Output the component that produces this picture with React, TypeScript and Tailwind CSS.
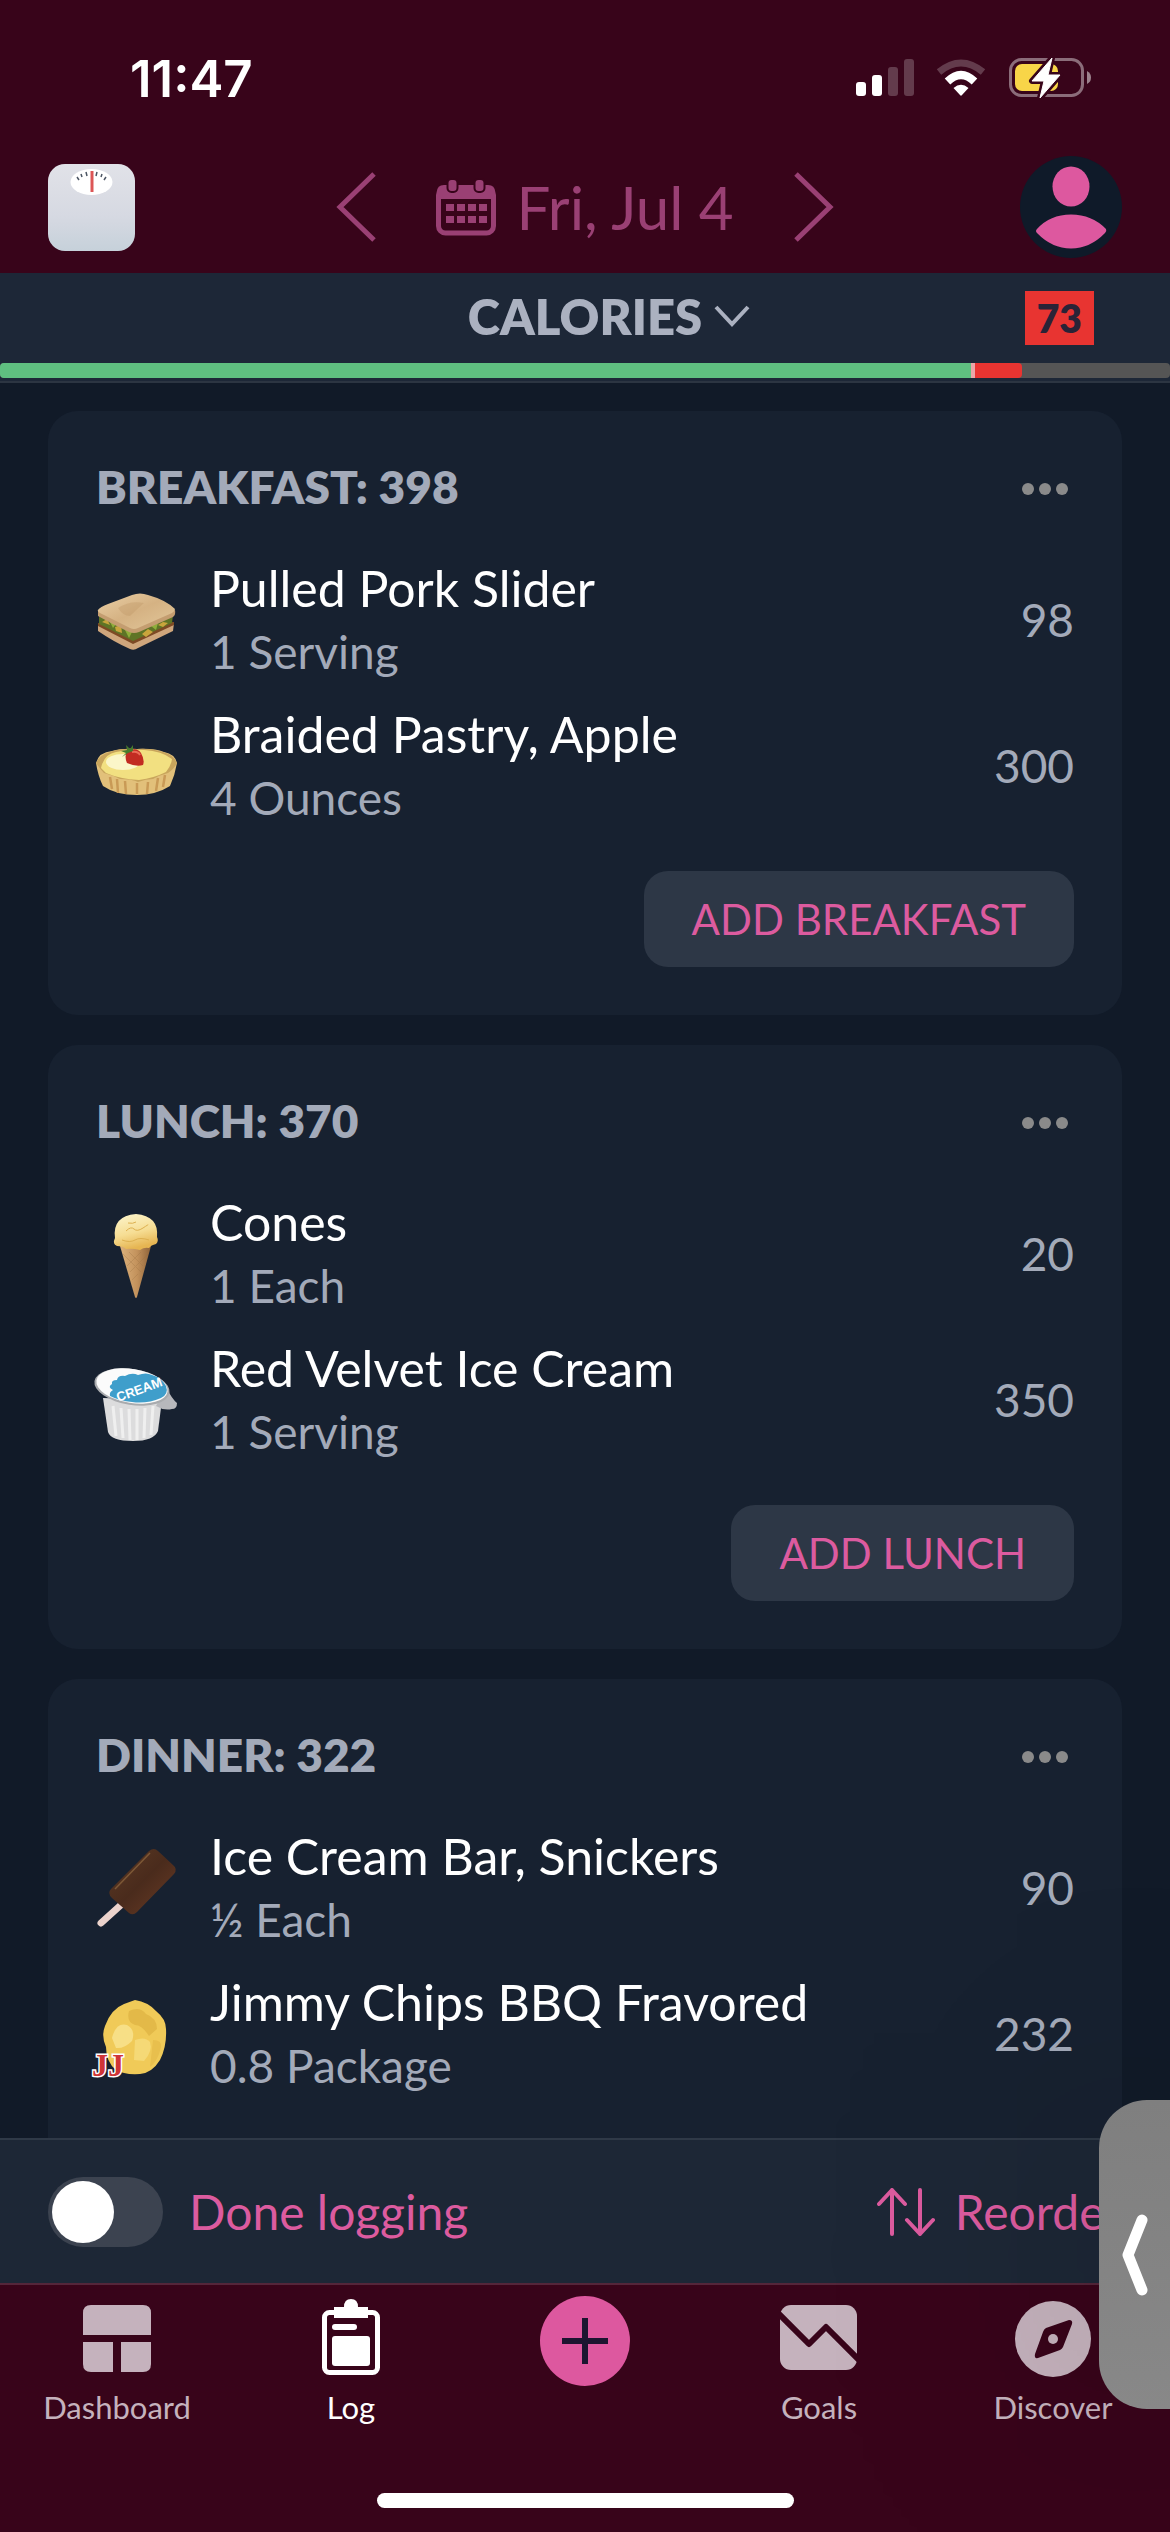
import { useState } from 'react';
import type { ReactNode } from 'react';

interface FoodItem {
  name: string;
  amount: string;
  calories: number;
  icon: ReactNode;
}

interface Meal {
  title: string;
  items: FoodItem[];
  addLabel?: string;
}

function SandwichIcon() {
  return (
    <svg viewBox="0 0 80 80" className="size-20 shrink-0 overflow-visible" aria-hidden="true">
      <defs>
        <linearGradient id="bread" x1="0" y1="0" x2="1" y2="1">
          <stop offset="0" stopColor="#e9cfa6" />
          <stop offset="0.5" stopColor="#d5b283" />
          <stop offset="1" stopColor="#e2c79a" />
        </linearGradient>
      </defs>
      <path d="M2 43 L2 51 Q18 62 34 69 Q38 71 42 68 L77 51 L78 43 L38 60Z" fill="#cfa67c" />
      <path d="M2 43 L2 46 L37 64 L78 45 L78 42Z" fill="#7d4a24" />
      <path d="M3 35 L3 44 L37 61 L76 43 L77 35 L38 51Z" fill="#5f7426" />
      <path d="M6 42l5-3 3 6zM19 47l6-2 1 8-6-2zM46 54l6-5 5 3-7 5zM62 45l5-3 5 1-5 4z" fill="#c9a53c" />
      <path d="M13 40l7 4-3 4zM28 48l8 4-3 6zM55 46l7-3-2 7z" fill="#8fae3a" />
      <path d="M2 30 L2 36 Q16 44 33 52 Q38 54 43 52 L77 37 Q80 35 79 30 L40 46Z" fill="#c49d70" />
      <path d="M2 30 Q4 27 12 24 L36 15 Q44 12 52 15 Q70 20 79 29 Q79 31 76 33 L42 48 Q38 50 34 48 L4 33 Q1 31 2 30Z" fill="url(#bread)" />
      <path d="M22 28 Q34 20 48 23 Q40 30 34 36 Q27 36 22 28Z" fill="#bd9665" opacity="0.35" />
    </svg>
  );
}

function TartIcon() {
  return (
    <svg viewBox="0 0 80 80" className="size-20 shrink-0 overflow-visible" aria-hidden="true">
      <path d="M0 37 Q3 26 16 25 Q26 22 41 23 Q58 22 68 26 Q79 28 81 37 Q79 49 74 60 Q60 69 41 69 Q20 69 7 60 Q2 50 0 37Z" fill="#e2c07a" />
      <path d="M14 51l2 12M21 53l1 14M29 55l1 13M41 57v11M52 56l-1 12M62 52l-2 13M69 49l-2 12" stroke="#c99a56" strokeWidth="2.500" />
      <path d="M0 37 Q4 43 8 47 Q16 49 24 53 Q36 53 42 56 Q50 53 57 53 Q64 49 72 47 Q78 43 81 37 Q78 29 67 26 Q54 22 41 23 Q25 22 14 26 Q3 29 0 37Z" fill="#c8a55c" />
      <path d="M5 42 Q8 28 20 26 Q34 23 48 24 Q66 25 76 33 Q75 40 70 46 Q58 52 43 54 Q24 53 10 47Z" fill="#f2e081" />
      <ellipse cx="27" cy="36" rx="17" ry="8" fill="#fbf6c9" />
      <path d="M31 26 Q40 20 45 27 Q49 34 47 39 Q40 41 31 37 Q28 30 31 26Z" fill="#c22b22" />
      <path d="M36 26 Q42 25 44 29" stroke="#ea6a56" strokeWidth="2" fill="none" />
      <path d="M26 31l4-4-5-2 6-1-1-5 4 4 3-4v6l-5 2z" fill="#477a2c" />
    </svg>
  );
}

function ConeIcon() {
  return (
    <svg viewBox="0 0 80 80" className="size-20 shrink-0 overflow-visible" aria-hidden="true">
      <defs>
        <linearGradient id="wafer">
          <stop offset="0" stopColor="#dcb27c" />
          <stop offset="0.55" stopColor="#c3925c" />
          <stop offset="1" stopColor="#8d6239" />
        </linearGradient>
        <linearGradient id="vanilla" x1="0" y1="0" x2="0.3" y2="1">
          <stop offset="0" stopColor="#fdf6cf" />
          <stop offset="0.6" stopColor="#f6dd93" />
          <stop offset="1" stopColor="#e6b552" />
        </linearGradient>
      </defs>
      <path d="M24 32 L55 32 L41 83 Q40 85 39 83Z" fill="url(#wafer)" />
      <path d="M27 40l18 18M33 38l14 14M52 40l-18 18M45 38L31 52M42 60l-6 6" stroke="#9c7142" strokeWidth="1" opacity="0.3" />
      <path d="M19 24 Q16 2 40 0 Q63 2 61 23 Q63 27 60 30 Q55 31 53 34 Q48 33 44 36 Q36 34 30 35 Q27 32 21 32 Q16 30 19 24Z" fill="url(#vanilla)" />
      <path d="M30 17q5-5 8-2t9-1 5-3M32 9q5 1 8-1M26 26q8 3 13 0t14 0" stroke="#ddb050" strokeWidth="1" fill="none" />
    </svg>
  );
}

function CreamerIcon() {
  return (
    <svg viewBox="0 0 80 80" className="size-20 shrink-0 overflow-visible" aria-hidden="true">
      <path d="M7 38 L12 72 Q15 81 37 81 Q58 81 62 71 L66 40Z" fill="#dcdcdd" />
      <path d="M17 46l3 30M25 48l2 30M33 49l1 31M41 49v31M49 48l-1 30M57 46l-2 29" stroke="#efefef" strokeWidth="3" />
      <path d="M70 27 Q76 39 81 43 Q81 49 76 49 Q68 51 60 46Z" fill="#b7b8bc" />
      <ellipse cx="36" cy="27" rx="38" ry="18" transform="rotate(9 36 27)" fill="#a9abae" />
      <ellipse cx="36" cy="26" rx="36" ry="17" transform="rotate(9 36 26)" fill="#fbfbfb" />
      <path d="M17 30 Q11 27 16 24 Q15 20 21 20 Q22 15 29 16 Q36 12 42 15 Q50 12 56 15 Q66 18 70 26 Q73 34 65 38 Q51 44 36 42 Q24 41 14 36 Q13 32 17 30Z" fill="#3f9ecb" />
      <text x="43" y="34" textAnchor="middle" transform="rotate(-20 43 29)" fill="#ffffff" className="font-['Liberation_Sans_Narrow','Liberation_Sans',sans-serif] text-[13px] font-bold">
        CREAM
      </text>
    </svg>
  );
}

function IceCreamBarIcon() {
  return (
    <svg viewBox="0 0 80 80" className="size-20 shrink-0 overflow-visible" aria-hidden="true">
      <defs>
        <linearGradient id="chocolate" x1="0" y1="0" x2="1" y2="1">
          <stop offset="0" stopColor="#5b3a25" />
          <stop offset="0.5" stopColor="#4a2b1c" />
          <stop offset="1" stopColor="#6a3c26" />
        </linearGradient>
      </defs>
      <path d="M26 56 L5 75" stroke="#ecd3cc" strokeWidth="7" strokeLinecap="round" />
      <path d="M53 3 Q58 -1 62 3 L77 17 Q82 21 78 26 L41 64 Q37 68 33 65 L16 50 Q11 45 15 41Z" fill="url(#chocolate)" />
      <path d="M19 41 L54 5" stroke="#7d5836" strokeWidth="1.500" />
    </svg>
  );
}

function ChipIcon() {
  return (
    <svg viewBox="0 0 80 80" className="size-20 shrink-0 overflow-visible" aria-hidden="true">
      <path d="M39 6 Q52 8 60 17 Q70 25 70 35 Q71 52 64 66 Q56 79 44 80 Q28 81 20 76 Q10 68 10 53 Q5 42 9 32 Q15 15 28 10Z" fill="#f0ca58" />
      <path d="M33 17 Q44 12 50 20 Q61 24 61 35 L53 42 Q46 31 39 31 Q30 28 33 17Z" fill="#e3b948" />
      <path d="M16 44 Q20 28 31 31 Q40 36 36 47 Q28 55 20 54Z" fill="#f7df86" />
      <path d="M39 46 Q49 42 54 48 Q57 57 48 67 L38 66Z" fill="#f5d976" />
      <path d="M57 46 Q66 46 65 53 Q62 67 54 73Z" fill="#e8bf4d" />
      <text x="-4" y="82" fill="#cf3536" stroke="#ffffff" strokeWidth="3" paintOrder="stroke" className="font-['Liberation_Serif',serif] text-[32px] font-bold">
        JJ
      </text>
    </svg>
  );
}

const meals: Meal[] = [
  {
    title: 'BREAKFAST',
    addLabel: 'ADD BREAKFAST',
    items: [
      { name: 'Pulled Pork Slider', amount: '1 Serving', calories: 98, icon: <SandwichIcon /> },
      { name: 'Braided Pastry, Apple', amount: '4 Ounces', calories: 300, icon: <TartIcon /> },
    ],
  },
  {
    title: 'LUNCH',
    addLabel: 'ADD LUNCH',
    items: [
      { name: 'Cones', amount: '1 Each', calories: 20, icon: <ConeIcon /> },
      { name: 'Red Velvet Ice Cream', amount: '1 Serving', calories: 350, icon: <CreamerIcon /> },
    ],
  },
  {
    title: 'DINNER',
    items: [
      { name: 'Ice Cream Bar, Snickers', amount: '½ Each', calories: 90, icon: <IceCreamBarIcon /> },
      { name: 'Jimmy Chips BBQ Fravored', amount: '0.8 Package', calories: 232, icon: <ChipIcon /> },
    ],
  },
];

function StatusBar() {
  return (
    <div className="flex h-[156px] items-center justify-between pr-[78px] pl-[130px]">
      <span className="font-['Inter',sans-serif] text-[51px] leading-none font-semibold text-white">11:47</span>
      <div className="flex items-center gap-[22px]">
        <svg viewBox="0 0 58 38" className="h-[38px] w-[58px]" fill="#ffffff" aria-hidden="true">
          <rect x="0" y="23" width="10" height="14" rx="3" />
          <rect x="16" y="16" width="10" height="21" rx="3" />
          <rect x="32" y="8" width="10" height="29" rx="3" opacity="0.22" />
          <rect x="48" y="0" width="10" height="37" rx="3" opacity="0.22" />
        </svg>
        <svg viewBox="0 0 50 38" className="h-[38px] w-[50px]" aria-hidden="true">
          <path d="M3 13 Q25 -5 47 13" fill="none" stroke="#ffffff" strokeWidth="7" opacity="0.22" />
          <path d="M11.500 22.500 Q25 9.500 38.500 22.500" fill="none" stroke="#ffffff" strokeWidth="8" />
          <path d="M17.500 29 Q25 22.500 32.500 29 L26 36 Q25 37.500 24 36Z" fill="#ffffff" />
        </svg>
        <svg viewBox="0 0 84 42" className="h-[42px] w-[84px]" aria-hidden="true">
          <rect x="2.500" y="2.500" width="72" height="36" rx="11" fill="none" stroke="#ffffff" strokeWidth="3" opacity="0.42" />
          <path d="M79 14 Q83 16 83 20.500 Q83 25 79 27Z" fill="#ffffff" opacity="0.5" />
          <rect x="7" y="7" width="43" height="27" rx="7" fill="#f8d548" />
          <path d="M44 1 L24 24 L36 24 L32 41 L52 18 L40 18Z" fill="#ffffff" stroke="#38041a" strokeWidth="6" strokeLinejoin="round" />
          <path d="M44 1 L24 24 L36 24 L32 41 L52 18 L40 18Z" fill="#ffffff" stroke="#ffffff" strokeWidth="1" strokeLinejoin="round" />
        </svg>
      </div>
    </div>
  );
}

function DateHeader() {
  return (
    <div className="grid grid-cols-[1fr_auto_1fr] items-center px-12 pb-[15px]">
      <button type="button" aria-label="Weigh in" className="justify-self-start">
        <svg viewBox="0 0 87 87" className="size-[87px]" aria-hidden="true">
          <defs>
            <linearGradient id="scale" x1="0" y1="0" x2="0" y2="1">
              <stop offset="0" stopColor="#e1e2e8" />
              <stop offset="0.6" stopColor="#d6d9e2" />
              <stop offset="1" stopColor="#c6d1da" />
            </linearGradient>
          </defs>
          <rect width="87" height="87" rx="17" fill="url(#scale)" />
          <ellipse cx="43.500" cy="18" rx="21" ry="13" fill="#ffffff" />
          <path d="M29 13l2 3M33 10l1 3M38 8l1 4M49 8l-1 4M54 10l-1 3M58 13l-2 3" stroke="#4b5563" strokeWidth="1.500" />
          <path d="M44 7v21" stroke="#dc5656" strokeWidth="3" />
        </svg>
      </button>
      <div className="flex items-center gap-15 text-[#9a4074]">
        <button type="button" aria-label="Previous day">
          <svg viewBox="0 0 40 70" className="h-[70px] w-10" fill="none" stroke="currentColor" strokeWidth="5" aria-hidden="true">
            <path d="M38 2 L4 35 L38 68" />
          </svg>
        </button>
        <button type="button" className="flex items-center gap-5">
          <svg viewBox="0 0 60 58" className="h-[58px] w-[60px]" aria-hidden="true">
            <rect x="2.500" y="10" width="55" height="45" rx="7" fill="none" stroke="currentColor" strokeWidth="5" />
            <path d="M1 21 V14 Q1 7 8 7 H52 Q59 7 59 14 V21Z" fill="currentColor" />
            <rect x="11.500" y="1" width="10" height="13" rx="4" fill="currentColor" stroke="#38041a" strokeWidth="2" />
            <rect x="38.500" y="1" width="10" height="13" rx="4" fill="currentColor" stroke="#38041a" strokeWidth="2" />
            <path d="M10 26h8v7h-8zM21 26h8v7h-8zM32 26h8v7h-8zM43 26h8v7h-8zM10 38h8v7h-8zM21 38h8v7h-8zM32 38h8v7h-8zM43 38h8v7h-8z" fill="currentColor" />
          </svg>
          <span className="text-[60px] leading-16">Fri, Jul 4</span>
        </button>
        <button type="button" aria-label="Next day">
          <svg viewBox="0 0 40 70" className="h-[70px] w-10" fill="none" stroke="currentColor" strokeWidth="5" aria-hidden="true">
            <path d="M2 2 L36 35 L2 68" />
          </svg>
        </button>
      </div>
      <button type="button" aria-label="Profile" className="justify-self-end">
        <svg viewBox="0 0 102 102" className="size-[102px]" aria-hidden="true">
          <circle cx="51" cy="51" r="51" fill="#0f1a29" />
          <ellipse cx="51" cy="30.500" rx="18.500" ry="20" fill="#dd589f" />
          <path d="M17 73 Q30 58.500 51 58.500 Q72 58.500 86 73 Q87 75 85 77 Q70 92.500 51 92.500 Q32 92.500 17 77 Q15 75 17 73Z" fill="#dd589f" />
        </svg>
      </button>
    </div>
  );
}

function CaloriesBar() {
  return (
    <section className="border-b-2 border-[#2c3542] bg-[#1d2737]">
      <div className="grid h-[90px] grid-cols-[1fr_auto_1fr] items-center">
        <button type="button" className="col-start-2 flex items-center gap-3 pb-1 pl-12 text-[#abb1c0]">
          <span className="text-[49px] leading-14 font-extrabold">CALORIES</span>
          <svg viewBox="0 0 36 22" className="h-[22px] w-9" fill="none" stroke="currentColor" strokeWidth="4" aria-hidden="true">
            <path d="M2 2 L18 19 L34 2" />
          </svg>
        </button>
        <span className="mr-[76px] justify-self-end bg-[#e83431] px-3 text-[39px] leading-[54px] font-extrabold text-[#2a2337]">73</span>
      </div>
      <div className="mb-[3px] flex h-[15px] overflow-hidden rounded-sm bg-[#555555]">
        <div className="w-[83%] bg-[#5fbf80]" />
        <div className="w-1 bg-[#eba5a8]" />
        <div className="w-[4%] rounded-r bg-[#e83431]" />
      </div>
    </section>
  );
}

function MealCard({ meal }: { meal: Meal }) {
  const total = meal.items.reduce((sum, item) => sum + item.calories, 0);

  return (
    <section className="rounded-[30px] bg-[#172130] px-12 pt-11 pb-12">
      <div className="flex h-16 items-center justify-between">
        <h2 className="text-[46px] leading-16 font-extrabold text-[#a3aab9]">
          {meal.title}: {total}
        </h2>
        <button type="button" aria-label="More options" className="flex gap-[5px] pt-1 pr-[6px]">
          <span className="size-3 rounded-full bg-[#8a8a8a]" />
          <span className="size-3 rounded-full bg-[#8a8a8a]" />
          <span className="size-3 rounded-full bg-[#8a8a8a]" />
        </button>
      </div>
      <ul className="mt-7">
        {meal.items.map((item) => (
          <li key={item.name} className="flex items-center gap-[34px] py-[9px]">
            {item.icon}
            <div className="min-w-0 flex-1">
              <p className="text-[50px] leading-16 text-white">{item.name}</p>
              <p className="text-[46px] leading-16 text-[#a3aab9]">{item.amount}</p>
            </div>
            <span className="text-[46px] leading-16 text-[#a3aab9]">{item.calories}</span>
          </li>
        ))}
      </ul>
      <div className="mt-8 flex min-h-24 justify-end">
        {meal.addLabel && (
          <button type="button" className="rounded-3xl bg-[#2d3746] px-12 text-[42px] leading-none text-[#dc5b9f]">
            {meal.addLabel}
          </button>
        )}
      </div>
    </section>
  );
}

function ActionBar() {
  const [done, setDone] = useState(false);

  return (
    <div className="flex h-[145px] shrink-0 items-center justify-between border-t-2 border-[#2f3947] bg-[#1d2736] px-12 text-[48px] text-[#dc5b9f]">
      <div className="flex items-center gap-[26px]">
        <input
          id="done-logging"
          type="checkbox"
          checked={done}
          onChange={(e) => setDone(e.target.checked)}
          className="h-[70px] w-[115px] appearance-none rounded-full bg-[#3c4350] p-1 before:block before:size-[62px] before:rounded-full before:bg-white checked:bg-[#dc5b9f] checked:before:ml-auto"
        />
        <label htmlFor="done-logging">Done logging</label>
      </div>
      <button type="button" className="flex items-center gap-5">
        <svg viewBox="0 0 58 48" className="h-12 w-[58px]" fill="none" stroke="currentColor" strokeWidth="4" strokeLinecap="round" strokeLinejoin="round" aria-hidden="true">
          <path d="M15 46 V2 M2 16 L15 2 L28 16" />
          <path d="M43 2 V46 M30 32 L43 46 L56 32" />
        </svg>
        Reorder
      </button>
    </div>
  );
}

function TabBar() {
  return (
    <nav className="shrink-0 border-t-2 border-[#54263a] bg-[#38041a]">
      <div className="grid grid-cols-5 text-[31px] leading-9 text-[#c5b2bd]">
        <a href="#dashboard" className="flex flex-col items-center">
          <svg viewBox="0 0 68 68" className="mt-5 mb-4 size-[68px]" fill="currentColor" aria-hidden="true">
            <path d="M0 30 V8 Q0 0 8 0 H60 Q68 0 68 8 V30Z" />
            <path d="M0 37 H30 V67 H8 Q0 67 0 59Z" />
            <path d="M38 37 H68 V59 Q68 67 60 67 H38Z" />
          </svg>
          Dashboard
        </a>
        <a href="#log" className="flex flex-col items-center text-white">
          <svg viewBox="0 0 58 76" className="mt-[14px] mb-[14px] h-[76px] w-[58px]" aria-hidden="true">
            <rect x="2.500" y="13.500" width="53" height="60" rx="5" fill="none" stroke="currentColor" strokeWidth="5" />
            <path d="M12 19 V8 H22 Q22 0 29 0 Q36 0 36 8 H46 V19Z" fill="currentColor" />
            <rect x="10" y="25" width="25" height="6" rx="3" fill="currentColor" />
            <rect x="10" y="37" width="38" height="30" rx="3" fill="currentColor" />
          </svg>
          Log
        </a>
        <button type="button" aria-label="Add food" className="mt-[11px] grid size-[90px] place-items-center justify-self-center rounded-full bg-[#dd589f]">
          <svg viewBox="0 0 46 46" className="size-[46px]" stroke="#1c1530" strokeWidth="6" aria-hidden="true">
            <path d="M23 0 V46 M0 23 H46" />
          </svg>
        </button>
        <a href="#goals" className="flex flex-col items-center">
          <svg viewBox="0 0 78 66" className="mt-5 mb-[18px] h-[66px] w-[78px]" aria-hidden="true">
            <rect width="77" height="65" rx="11" fill="currentColor" />
            <path d="M-4 6 L29 39 L46 22 L82 58" fill="none" stroke="#38041a" strokeWidth="6" strokeLinejoin="round" />
          </svg>
          Goals
        </a>
        <a href="#discover" className="flex flex-col items-center">
          <svg viewBox="0 0 76 76" className="mt-4 mb-3 size-[76px]" aria-hidden="true">
            <circle cx="38" cy="38" r="38" fill="currentColor" />
            <path d="M54 19 Q58 19 57 23 L48 46 Q47 48 45 49 L23 57 Q19 58 20 53 L28 31 Q29 28 31 27Z" fill="#38041a" />
            <circle cx="38" cy="38" r="5" fill="currentColor" />
          </svg>
          Discover
        </a>
      </div>
      <div className="mt-[68px] flex justify-center pb-6">
        <div className="h-[15px] w-[417px] rounded-full bg-white" />
      </div>
    </nav>
  );
}

export default function App() {
  return (
    <div className="relative flex h-screen flex-col overflow-hidden bg-[#111a28] font-['Lato','Noto_Sans',sans-serif]">
      <header className="shrink-0 bg-[#38041a]">
        <StatusBar />
        <DateHeader />
        <CaloriesBar />
      </header>
      <main className="flex min-h-0 flex-1 flex-col gap-[30px] overflow-y-auto px-12 pt-7 pb-7 [scrollbar-width:none]">
        {meals.map((meal) => (
          <MealCard key={meal.title} meal={meal} />
        ))}
      </main>
      <ActionBar />
      <TabBar />
      <button
        type="button"
        aria-label="Open side panel"
        className="absolute right-0 bottom-[123px] flex h-[309px] w-[71px] items-center justify-center rounded-l-[48px] bg-gradient-to-b from-[#7f7f7f] to-[#888888] shadow-[0_0_300px_rgba(0,0,0,0.35)]"
      >
        <svg viewBox="0 0 26 82" className="h-[82px] w-[26px]" fill="none" stroke="#ffffff" strokeWidth="11" strokeLinecap="round" strokeLinejoin="round" aria-hidden="true">
          <path d="M20 6 L6 41 L20 76" />
        </svg>
      </button>
    </div>
  );
}
